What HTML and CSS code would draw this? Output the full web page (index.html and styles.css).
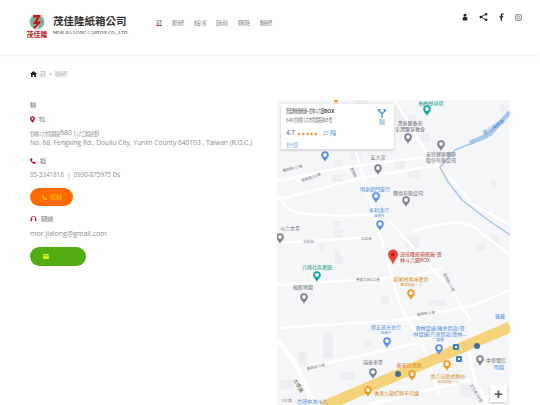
FILE: index.html
```html
<!DOCTYPE html>
<html lang="zh-Hant">

<head>
    <meta charset="UTF-8">
    <meta name="viewport" content="width=device-width, initial-scale=1.0">
    <title>茂佳隆紙箱公司</title>
    <link rel="stylesheet" href="styles.css">
</head>

<body>

    <header class="topbar">
        <a class="logo">
            <div class="logo-mark">
                <svg width="20" height="16" viewBox="0 0 26 20">
                    <circle cx="13" cy="10" r="10" fill="#c5d8ca"/>
                    <path d="M4 10a9 9 0 0 1 7-8.500v17A9 9 0 0 1 4 10zM22 10a9 9 0 0 0-7-8.500v17a9 9 0 0 0 7-8.500z" fill="#82ab90"/>
                    <path d="M8 1h10l-4.500 8H18l-1 2.500-7 7.500-1.500-2 4-4.500H8l4.500-8.500H8z" fill="#c3161c"/>
                </svg>
                <span class="logo-sign">茂佳隆</span>
            </div>
            <div class="logo-text">
                <span class="logo-zh">茂佳隆紙箱公司</span>
                <span class="logo-en">MOR JIA LONG CARTON CO., LTD.</span>
            </div>
        </a>
        <nav class="menu">
            <a class="menu-item active"><span class="zh zh2">首頁</span></a>
            <a class="menu-item"><span class="zh zh4">關於我們</span></a>
            <a class="menu-item"><span class="zh zh4">產品介紹</span></a>
            <a class="menu-item"><span class="zh zh4">最新消息</span></a>
            <a class="menu-item"><span class="zh zh4">服務項目</span></a>
            <a class="menu-item"><span class="zh zh4">聯絡我們</span></a>
        </nav>
        <div class="tools">
            <svg class="tool" width="6" height="8" viewBox="0 0 8 9"><circle cx="4" cy="2" r="1.800" fill="#222"/><path d="M1 9V6a2 2 0 0 1 2-2h2a2 2 0 0 1 2 2v3z" fill="#222"/></svg>
            <svg class="tool" width="9" height="8" viewBox="0 0 10 9"><path d="M8 1.300 2 4.500l6 3.200" fill="none" stroke="#222" stroke-width="1"/><circle cx="8" cy="1.500" r="1.400" fill="#222"/><circle cx="2" cy="4.500" r="1.500" fill="#222"/><circle cx="8" cy="7.500" r="1.400" fill="#222"/></svg>
            <svg class="tool" width="5" height="8" viewBox="0 0 6 9"><path d="M2 9V5H.6V3.500H2V2.300C2 .9 2.800.3 4 .3h1.300v1.400h-.8c-.7 0-.9.300-.9.800v1h1.700L5 5H3.600v4z" fill="#222"/></svg>
            <svg class="tool" width="7" height="7" viewBox="0 0 8 8"><rect x=".5" y=".5" width="7" height="7" rx="2" fill="none" stroke="#777"/><circle cx="4" cy="4" r="1.700" fill="none" stroke="#777" stroke-width=".9"/></svg>
        </div>
    </header>

    <div class="crumbs">
        <svg width="7" height="6" viewBox="0 0 7 6"><path d="M3.500 0 7 3H6v3H4.300V4H2.700v2H1V3H0z" fill="#222"/></svg>
        <span class="zh zh2">首頁</span>
        <span class="crumb-sep">&gt;</span>
        <span class="zh zh4">聯絡我們</span>
    </div>

    <main class="content">
        <section class="info">
            <h2 class="info-title"><span class="zh zh2">聯絡</span></h2>

            <div class="info-label">
                <svg width="5" height="7" viewBox="0 0 6 8"><path d="M3 0a3 3 0 0 1 3 3c0 2-3 5-3 5S0 5 0 3a3 3 0 0 1 3-3z" fill="#b3262b"/><circle cx="3" cy="3" r="1.100" fill="#fff"/></svg>
                <span class="zh zh2">地址</span>
            </div>
            <p class="info-line line-zh"><span class="zh zh10">雲林縣斗六市豐興路段</span>680 (<span class="zh zh7">斗六工業區倉庫</span>)</p>
            <p class="info-line line-en">No. 68, Fengxing Rd., Douliu City, Yunlin County 640103 , Taiwan (R.O.C.)</p>

            <div class="info-label label-gap">
                <svg width="6" height="6" viewBox="0 0 7 7"><path d="M1.500 0 3 1.800 2.200 3c.4.800 1 1.400 1.800 1.800L5.200 4 7 5.500 6 7C2.800 7 0 4.200 0 1z" fill="#b3262b"/></svg>
                <span class="zh zh2">電話</span>
            </div>
            <p class="info-line line-tel">05-5341818 &nbsp;|&nbsp; 0930-875975 Ds</p>
            <a class="pill pill-call">
                <svg width="5" height="5" viewBox="0 0 7 7"><path d="M1.500 0 3 1.800 2.200 3c.4.800 1 1.400 1.800 1.800L5.200 4 7 5.500 6 7C2.800 7 0 4.200 0 1z" fill="#ffd000"/></svg>
                <span class="zh zh4">撥打電話</span>
            </a>

            <div class="info-label label-gap">
                <svg width="7" height="6" viewBox="0 0 7 7"><path d="M.7 4V3.300a2.800 2.800 0 0 1 5.600 0V4" fill="none" stroke="#b3262b" stroke-width="1.100"/><rect y="3.300" width="2" height="2.700" rx=".7" fill="#b3262b"/><rect x="5" y="3.300" width="2" height="2.700" rx=".7" fill="#b3262b"/></svg>
                <span class="zh zh4">客服信箱</span>
            </div>
            <p class="info-line line-mail">mor.jialong@gmail.com</p>
            <a class="pill pill-mail">
                <svg width="6" height="5" viewBox="0 0 6 5"><rect width="6" height="5" rx=".6" fill="#e6f000"/><path d="M0 1.800h6" stroke="#52ac14" stroke-width=".7"/></svg>
            </a>
        </section>

        <section class="map">
            <svg class="map-art" width="233" height="305" viewBox="277 100 233 305">
                <defs>
                    <g id="pin">
                        <path d="M0 0C-1 -3 -3.800 -4 -3.800 -7a3.800 3.800 0 0 1 7.600 0C3.800 -4 1 -3 0 0z"/>
                        <circle cy="-7" r="1.900" fill="#fff"/>
                    </g>
                </defs>
                <rect x="277" y="100" width="233" height="305" fill="#f5f6f8"/>

                <g class="blocks">
                    <rect x="355" y="100" width="14" height="6"/>
                    <rect x="396" y="108" width="9" height="14"/>
                    <rect x="408" y="115" width="8" height="8"/>
                    <rect x="420" y="133" width="10" height="9"/>
                    <rect x="350" y="153" width="12" height="7"/>
                    <rect x="334" y="160" width="9" height="8"/>
                    <rect x="395" y="160" width="10" height="9"/>
                    <rect x="408" y="170" width="12" height="8"/>
                    <rect x="332" y="175" width="11" height="7"/>
                    <rect x="490" y="180" width="6" height="7"/>
                    <rect x="334" y="221" width="6" height="7"/>
                    <rect x="334" y="229" width="9" height="10"/>
                    <rect x="319" y="243" width="5" height="8"/>
                    <rect x="335" y="250" width="5" height="11"/>
                    <rect x="335" y="257" width="8" height="7"/>
                    <rect x="405" y="236" width="14" height="12"/>
                    <rect x="476" y="243" width="9" height="7"/>
                    <rect x="490" y="235" width="9" height="10"/>
                    <rect x="382" y="295" width="7" height="10"/>
                    <rect x="323" y="333" width="10" height="25"/>
                    <rect x="365" y="340" width="8" height="6"/>
                    <rect x="298" y="352" width="8" height="15"/>
                    <rect x="428" y="300" width="18" height="6"/>
                    <rect x="460" y="385" width="12" height="12"/>
                    <rect x="340" y="372" width="14" height="8"/>
                    <rect x="280" y="380" width="14" height="9"/>
                    <rect x="500" y="105" width="8" height="7"/>
                </g>

                <g class="roads">
                    <path d="M356 152 375 217 400 305 422 343 440 395"/>
                    <path d="M388 220 452 290 470 320"/>
                    <path d="M395 100 425 150 470 200"/>
                    <path d="M277 181 340 168 425 157"/>
                    <path d="M277 200 360 178 440 165"/>
                    <path d="M280 195C285 215 300 217 375 215"/>
                    <path d="M277 243 375 237"/>
                    <path d="M277 285 390 278"/>
                    <path d="M415 277 442 268"/>
                    <path d="M412 232C440 222 470 218 480 232L510 255"/>
                    <path d="M277 328 402 320 475 305 510 290"/>
                    <path d="M305 368 422 342"/>
                    <path d="M370 404 470 380"/>
                    <path d="M468 347 475 380 488 405"/>
                    <path class="road-wide" d="M275 337 295 363 315 405"/>
                    <path d="M465 200 510 225"/>
                </g>
                <path class="highway" d="M322 407 510 327"/>
                <path class="creek" d="M488 137 455 150 440 167 448 182 462 200 488 220 510 235"/>
                <path class="creek creek-wide" d="M510 112 490 134 470 143"/>

                <g class="labels gray">
                    <text x="410" y="125" text-anchor="middle">潤泰醫養老</text>
                    <text x="410" y="131" text-anchor="middle">全潤醫客教會</text>
                    <text x="441" y="156" text-anchor="middle">安欣健康團康</text>
                    <text x="441" y="162" text-anchor="middle">股份有限公司</text>
                    <text x="378" y="159" text-anchor="middle">玄大宮</text>
                    <text x="408" y="195" text-anchor="middle">隆德有限公司</text>
                    <text x="290" y="230" text-anchor="middle">斗六文旦</text>
                    <text x="303" y="289" text-anchor="middle">植配地圖</text>
                    <text x="373" y="364" text-anchor="middle">瑞泰車業</text>
                    <text x="486" y="362">中華電信</text>
                </g>
                <g class="labels small">
                    <text x="303" y="243">北排街</text>
                    <text x="361" y="240">北祥街</text>
                    <text x="356" y="281">豐興北街112巷</text>
                    <text x="417" y="316" transform="rotate(-8 417 316)">豐興路25巷</text>
                    <text x="307" y="370" transform="rotate(-13 307 370)">豐興路75巷</text>
                    <text x="283" y="172" transform="rotate(-14 283 172)">豐興路117巷</text>
                    <text x="302" y="182" transform="rotate(-20 302 182)">豐興路131巷</text>
                    <text x="350" y="168" transform="rotate(65 350 168)">豐興路</text>
                    <text x="443" y="274" transform="rotate(62 443 274)">豐興路110巷</text>
                    <text x="281" y="402">文化路</text>
                    <text x="470" y="385" transform="rotate(60 470 385)">文化路166巷</text>
                    <text x="293" y="380" transform="rotate(60 293 380)" class="road-name">大學路</text>
                </g>
                <g class="labels blue">
                    <text x="375" y="191" text-anchor="middle">明泰鋁門窗行</text>
                    <text x="379" y="212" text-anchor="middle">永利漆行</text>
                    <text x="379" y="217" class="tiny" text-anchor="middle">油漆行</text>
                    <text x="386" y="329" text-anchor="middle">新宏昌五金行</text>
                    <text x="386" y="334" class="tiny" text-anchor="middle">五金行</text>
                    <text x="440" y="330" text-anchor="middle">雲林當舖/機車借款/雲</text>
                    <text x="440" y="336" text-anchor="middle">林當舖/汽車借款/雲林...</text>
                    <text x="440" y="341" class="tiny" text-anchor="middle">當舖</text>
                    <text x="495" y="318">蓮藏</text>
                    <text x="494" y="369">明錦</text>
                    <text x="297" y="403">台灣中油斗六</text>
                </g>
                <g class="labels orange">
                    <text x="411" y="281" text-anchor="middle">稻家村素味農食</text>
                    <text x="411" y="286" class="tiny" text-anchor="middle">素食料理 • $</text>
                    <text x="409" y="367" text-anchor="middle">豪客居酒館</text>
                    <text x="448" y="378" text-anchor="middle">萬八自助式熱炒</text>
                    <text x="448" y="383" class="tiny" text-anchor="middle">台式料理 • $</text>
                    <text x="374" y="395">香港九龍紅燒羊肉爐</text>
                </g>
                <g class="labels green">
                    <text x="317" y="269" text-anchor="middle">八德社區農園</text>
                    <text x="431" y="105" text-anchor="middle">柚柚槌球場</text>
                </g>
                <g class="labels red">
                    <text x="400" y="256">茂佳隆紙箱紙廠-雲</text>
                    <text x="400" y="262">林斗六園BOX</text>
                </g>
                <text class="labels creek-name" x="484" y="135" transform="rotate(-32 484 135)">湖山溪排水</text>

                <use href="#pin" x="427" y="116" fill="#12a5ab"/>
                <use href="#pin" x="408" y="144" fill="#78858c"/>
                <use href="#pin" x="441" y="151" fill="#78858c"/>
                <use href="#pin" x="325" y="162" fill="#5d8fe8"/>
                <use href="#pin" x="378" y="175" fill="#78858c"/>
                <use href="#pin" x="376" y="203" fill="#5d8fe8"/>
                <use href="#pin" x="406" y="207" fill="#78858c"/>
                <use href="#pin" x="380" y="231" fill="#5d8fe8"/>
                <use href="#pin" x="280" y="244" fill="#78858c"/>
                <use href="#pin" x="317" y="282" fill="#12a5ab"/>
                <use href="#pin" x="304" y="304" fill="#78858c"/>
                <use href="#pin" x="411" y="300" fill="#f09a1d"/>
                <use href="#pin" x="387" y="348" fill="#5d8fe8"/>
                <use href="#pin" x="439" y="355" fill="#5d8fe8"/>
                <use href="#pin" x="373" y="379" fill="#78858c"/>
                <use href="#pin" x="480" y="366" fill="#78858c"/>
                <use href="#pin" x="412" y="381" fill="#f09a1d"/>
                <use href="#pin" x="447" y="371" fill="#f09a1d"/>
                <use href="#pin" x="368" y="397" fill="#f09a1d"/>
                <use href="#pin" x="336" y="104" fill="#f09a1d"/>

                <rect x="453" y="344" width="6" height="6" rx="1" fill="#3c7ec8"/>
                <rect x="455" y="346" width="2" height="2" fill="#fff"/>
                <rect x="456" y="356" width="6" height="6" rx="1" fill="#3c7ec8"/>
                <rect x="458" y="358" width="2" height="2" fill="#fff"/>
                <circle cx="477" cy="346" r="3" fill="#3d6d9e"/>
                <circle cx="398" cy="374" r="3" fill="#3d6d9e"/>

                <path d="M393 265C392 260 388 258 388 254.500a5 5 0 0 1 10 0C398 258 394 260 393 265z" fill="#ea4335"/>
                <circle cx="393" cy="254.500" r="1.800" fill="#a61d17"/>
            </svg>

            <div class="map-card">
                <div class="card-main">
                    <div class="card-name"><span class="zh zh7">茂佳隆紙箱紙廠</span>-<span class="zh zh5">雲林斗六園</span>BOX</div>
                    <div class="card-addr">640<span class="zh zh10">雲林縣斗六市豐興路段</span>68<span class="zh zh1">號</span></div>
                    <div class="card-rate">
                        <span class="rate-num">4.7</span>
                        <span class="rate-stars">★★★★★</span>
                        <span class="rate-count">27 <span class="zh zh2">評論</span></span>
                    </div>
                    <div class="card-link"><span class="zh zh4">放大地圖</span></div>
                </div>
                <div class="card-route">
                    <svg width="8" height="9" viewBox="0 0 10 11"><path d="M5 11V6L1.500 2.500M5 6l3.500-3.500" fill="none" stroke="#5b9bd8" stroke-width="1.800"/><path d="M0 4V0h4zM10 4V0H6z" fill="#5b9bd8"/></svg>
                    <span class="zh zh2">路線</span>
                </div>
            </div>

            <div class="map-zoom">+</div>
        </section>
    </main>

</body>

</html>
```

FILE: styles.css
```css
body {
    margin: 0;
    padding: 0;
    height: 405px;
    overflow: hidden;
    background-color: #fff;
    font-family: "Open Sans", "Noto Sans CJK TC", sans-serif;
    color: #888;
}

p {
    margin: 0;
    padding: 0;
}

/* narrow han text, each glyph takes 3px */
.zh {
    display: inline-block;
    overflow: visible;
    font-family: "Noto Sans CJK TC", sans-serif;
    font-size: 6px;
    line-height: 8px;
    font-weight: 400;
    white-space: nowrap;
    transform: scaleX(0.5);
    transform-origin: 0 50%;
}

.zh1 { width: 3px; }
.zh2 { width: 6px; }
.zh4 { width: 12px; }
.zh5 { width: 15px; }
.zh7 { width: 21px; }
.zh10 { width: 30px; }

.topbar {
    display: flex;
    align-items: flex-start;
    height: 54px;
    padding-left: 26px;
    padding-right: 18px;
    box-sizing: border-box;
    box-shadow: 0 1px 3px rgba(0, 0, 0, 0.08);
}

.logo {
    display: flex;
    gap: 5px;
    width: 130px;
    padding-top: 14px;
}

.logo-mark {
    display: flex;
    flex-direction: column;
    align-items: center;
    width: 22px;
}

.logo-sign {
    font-family: "Noto Sans CJK TC", sans-serif;
    font-size: 7px;
    line-height: 8px;
    font-weight: 700;
    color: #b3161c;
    white-space: nowrap;
}

.logo-text {
    display: flex;
    flex-direction: column;
}

.logo-zh {
    font-family: "Noto Sans CJK TC", sans-serif;
    font-size: 10.500px;
    line-height: 14px;
    font-weight: 700;
    color: #333;
    white-space: nowrap;
}

.logo-en {
    font-family: "Liberation Serif", serif;
    font-size: 4.800px;
    line-height: 9px;
    color: #333;
    white-space: nowrap;
}

.menu {
    display: flex;
    gap: 10px;
    padding-top: 15px;
}

.menu-item {
    height: 10px;
    line-height: 8px;
    color: #777;
}

.menu-item.active {
    border-bottom: 1px solid #c0392b;
}

.tools {
    display: flex;
    align-items: center;
    gap: 11px;
    margin-left: auto;
    padding-top: 13px;
}

.crumbs {
    display: flex;
    align-items: center;
    gap: 3px;
    padding: 15px 30px 0;
    height: 10px;
    font-size: 5px;
    color: #aaa;
}

.crumb-sep {
    color: #666;
}

.content {
    display: flex;
    justify-content: space-between;
    padding: 21px 30px 0;
}

.info {
    width: 230px;
    font-size: 7px;
}

.info-title {
    margin: 0;
    font-size: 6px;
    line-height: 10px;
    font-weight: 400;
    color: #666;
}

.info-label {
    display: flex;
    align-items: center;
    gap: 4px;
    margin-top: 4px;
    height: 10px;
    color: #666;
}

.label-gap {
    margin-top: 8px;
}

.info-line {
    margin-top: 4px;
    font-size: 7px;
    line-height: 10px;
    white-space: nowrap;
    color: #8c8c8c;
}

.line-en {
    margin-top: 0;
    font-size: 6.650px;
}

.line-tel {
    font-size: 6.200px;
}

.line-mail {
    margin-top: 5px;
}

.line-zh .zh {
    vertical-align: -1px;
}

.pill {
    display: flex;
    align-items: center;
    justify-content: center;
    gap: 3px;
    margin-top: 8px;
    height: 18px;
    border-radius: 10px;
}

.pill-call {
    width: 43px;
    background-color: #ff6a00;
    color: #ffd000;
}

.pill-mail {
    width: 56px;
    height: 19px;
    justify-content: flex-start;
    padding-left: 13px;
    box-sizing: border-box;
    background-color: #52ac14;
}

.map {
    position: relative;
    width: 233px;
    height: 305px;
    overflow: hidden;
}

.map-art {
    display: block;
}

.blocks rect {
    fill: #eceef1;
}

.roads path {
    fill: none;
    stroke: #fff;
    stroke-width: 2.500;
}

.roads .road-wide {
    stroke-width: 5;
}

.highway {
    fill: none;
    stroke: #f6d27a;
    stroke-width: 11;
}

.creek {
    fill: none;
    stroke: #a6c8f0;
    stroke-width: 1.500;
}

.creek-wide {
    stroke-width: 4.500;
}

.labels {
    font-family: "Noto Sans CJK TC", sans-serif;
    font-size: 5px;
}

.labels .tiny {
    font-size: 3.500px;
}

.gray {
    fill: #68747a;
}

.small {
    font-size: 3.600px;
    fill: #7b8287;
}

.small .road-name {
    font-size: 5px;
    fill: #555;
}

.blue {
    fill: #4a88e4;
}

.orange {
    fill: #dd8a22;
}

.green {
    fill: #129c8c;
}

.red {
    fill: #c5332a;
}

.creek-name {
    fill: #3d7fd0;
}

.map-card {
    position: absolute;
    left: 4px;
    top: 4px;
    width: 113px;
    height: 45px;
    display: flex;
    justify-content: space-between;
    box-sizing: border-box;
    padding: 3px 6px 0 5px;
    background-color: #fff;
    box-shadow: 0 1px 3px rgba(0, 0, 0, 0.2);
    font-family: "Roboto", "Noto Sans CJK TC", sans-serif;
}

.card-name {
    font-size: 5.500px;
    line-height: 8px;
    font-weight: 500;
    color: #333;
    white-space: nowrap;
}

.card-name .zh {
    color: #444;
}

.card-addr {
    margin-top: 1px;
    font-size: 4.500px;
    line-height: 8px;
    color: #777;
    white-space: nowrap;
}

.card-rate {
    display: flex;
    align-items: center;
    gap: 2px;
    height: 11px;
    margin-top: 2px;
}

.rate-num {
    font-size: 6.500px;
    color: #666;
}

.rate-stars {
    font-size: 4.200px;
    color: #e08a2c;
}

.rate-count {
    margin-left: 3px;
    font-size: 5px;
    color: #4a8fe0;
}

.card-link {
    margin-top: 1px;
    line-height: 6px;
    color: #8ab4e8;
}

.card-route {
    display: flex;
    flex-direction: column;
    align-items: center;
    width: 8px;
    margin-right: 2px;
    margin-top: 2px;
    color: #5b9bd8;
}

.map-zoom {
    position: absolute;
    right: 3px;
    bottom: 3px;
    width: 17px;
    height: 17px;
    background-color: #fff;
    box-shadow: 0 1px 2px rgba(0, 0, 0, 0.2);
    font-family: "Liberation Sans", sans-serif;
    font-size: 15px;
    font-weight: 700;
    line-height: 17px;
    text-align: center;
    color: #555;
}
```
